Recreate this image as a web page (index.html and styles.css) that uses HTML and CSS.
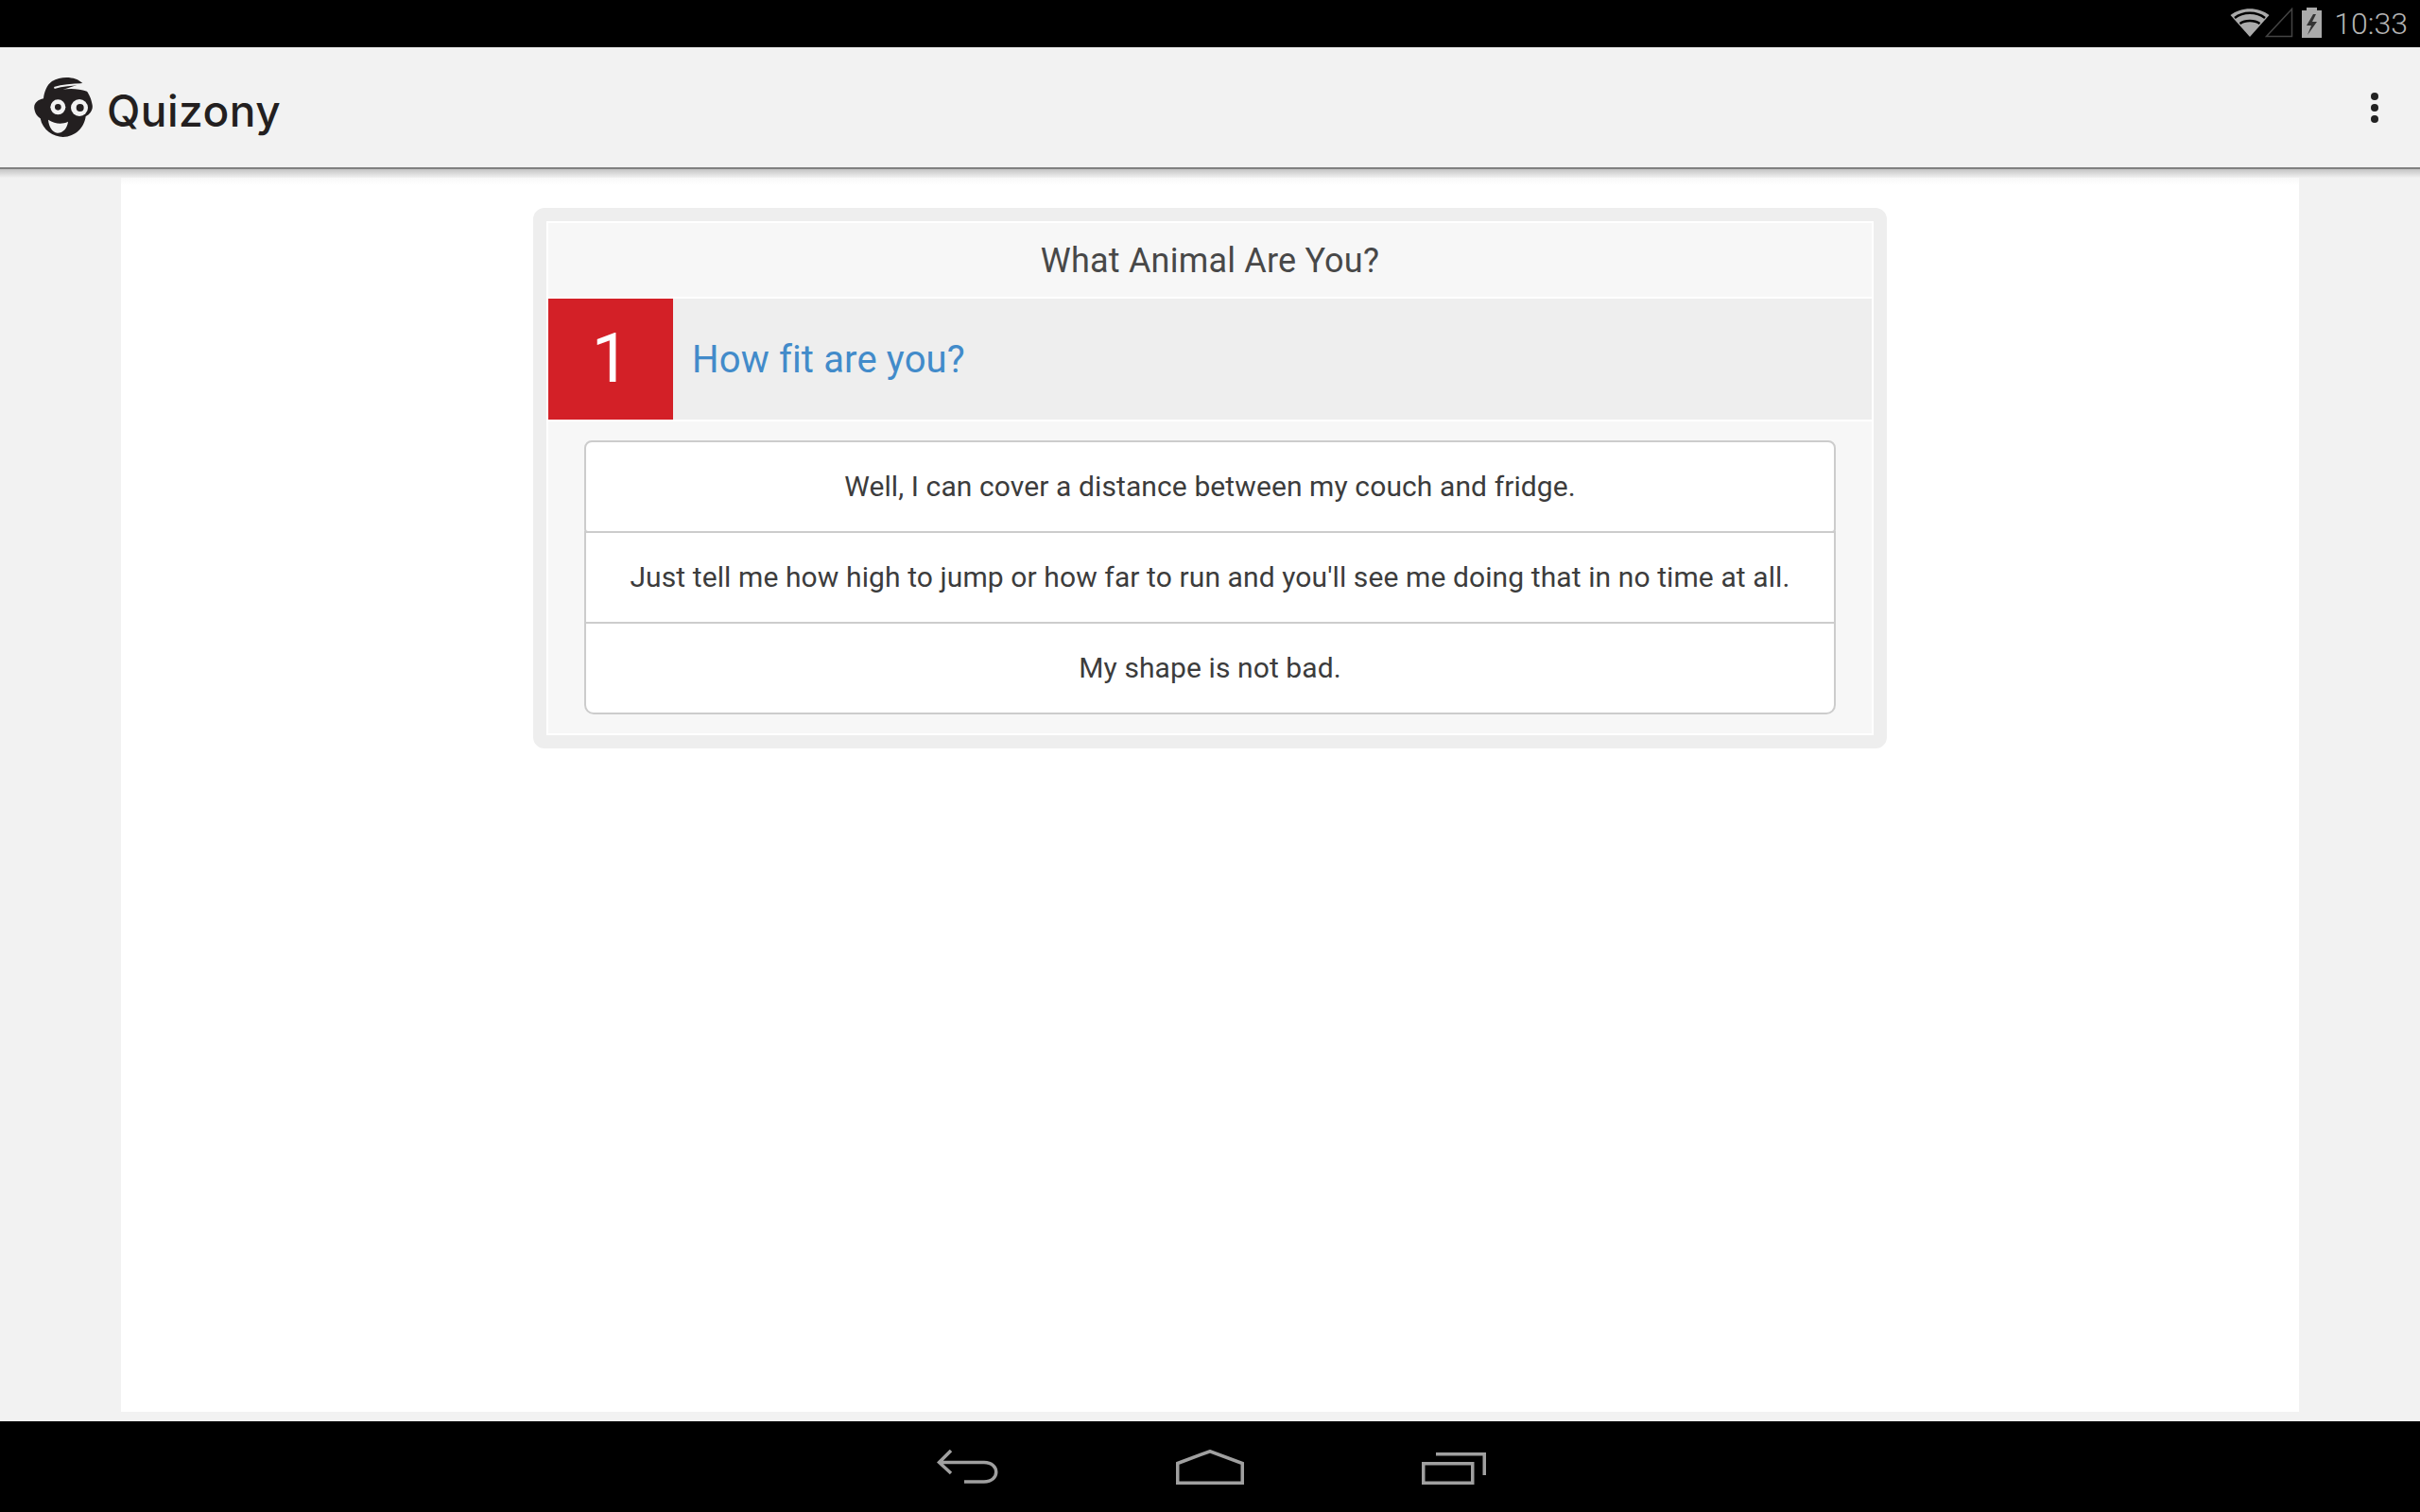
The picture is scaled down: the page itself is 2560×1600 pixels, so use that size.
FILE: index.html
```html
<!DOCTYPE html>
<html lang="en">
<head>
  <meta charset="UTF-8" />
  <title>Quizony</title>
  <link rel="stylesheet" href="styles.css">
</head>
<body>
  <div class="status-bar">
    <svg class="ic-wifi" width="42" height="32" viewBox="0 0 42 32">
      <path d="M0.5 8 C12 -1 30 -1 41.5 8 L21 31 Z" fill="#aaa"/>
      <path d="M5 11 C14 4 28 4 37 11 M10.500 17 C16 13 26 13 31.500 17" stroke="#000" stroke-width="2.500" fill="none"/>
    </svg>
    <svg class="ic-signal" width="30" height="32" viewBox="0 0 30 32">
      <path d="M1.500 30.500 L28.500 1.500 V30.500 Z" stroke="#444" stroke-width="1.500" fill="none"/>
    </svg>
    <svg class="ic-battery" width="21" height="32" viewBox="0 0 21 32">
      <path d="M5 0 H16 V3 H21 V32 H0 V3 H5 Z" fill="#aaa"/>
      <path d="M12 7 L5 19 H10 L6 29 L16 15 H11 L15 7 Z" fill="#333"/>
    </svg>
    <span class="clock">10:33</span>
  </div>

  <header class="app-bar">
    <div class="brand">
      <svg class="logo" width="65" height="65" viewBox="105 125 195 195">
        <path d="M262 146 C240 124 195 122 165 140 C148 152 140 175 138 195 C120 198 106 210 109 228 C112 245 120 252 128 258 C135 295 170 317 200 317 C240 317 268 285 272 252 C285 245 296 232 293 215 C290 195 282 180 276 172 C240 160 200 160 165 178 Z" fill="#231f20"/>
        <path d="M172 161 C200 153 235 150 262 150" stroke="#f2f2f2" stroke-width="6" fill="none"/>
        <circle cx="184" cy="222" r="24" fill="#f2f2f2"/>
        <circle cx="184" cy="222" r="10" fill="#231f20"/>
        <circle cx="252" cy="224" r="27" fill="#f2f2f2"/>
        <circle cx="254" cy="224" r="12" fill="#231f20"/>
        <path d="M153 262 C175 275 195 278 216 268 C214 290 198 305 182 304 C166 302 155 284 153 262 Z" fill="#f2f2f2"/>
      </svg>
      <span class="brand-name">Quizony</span>
    </div>
    <div class="menu-dots"><span></span><span></span><span></span></div>
  </header>
  <div class="bar-shadow"></div>

  <main class="content">
    <section class="quiz-card">
      <div class="quiz-inner">
        <h2 class="quiz-title">What Animal Are You?</h2>
        <div class="question">
          <div class="question-num">1</div>
          <div class="question-text">How fit are you?</div>
        </div>
        <div class="answers">
          <a class="answer">Well, I can cover a distance between my couch and fridge.</a>
          <a class="answer">Just tell me how high to jump or how far to run and you'll see me doing that in no time at all.</a>
          <a class="answer">My shape is not bad.</a>
        </div>
      </div>
    </section>
  </main>

  <nav class="nav-bar">
    <svg class="ic-back" width="66" height="36" viewBox="0 0 66 36">
      <path d="M15 1 L2.500 13.500 L15 25 M2.500 13.500 H50 C67 13.500 67 34 50 34 H29" stroke="#a0a0a0" stroke-width="3.500" fill="none"/>
    </svg>
    <svg class="ic-home" width="72" height="37" viewBox="0 0 72 37">
      <path d="M1.750 14.500 L36 1.750 L70.250 14.500 V35.250 H1.750 Z" stroke="#a0a0a0" stroke-width="3.500" fill="none"/>
    </svg>
    <svg class="ic-recent" width="68" height="34" viewBox="0 0 68 34">
      <path d="M15 1.750 H66.250 V24" stroke="#a0a0a0" stroke-width="3.500" fill="none"/>
      <rect x="1.750" y="11.750" width="52" height="20.500" stroke="#a0a0a0" stroke-width="3.500" fill="none"/>
    </svg>
  </nav>
</body>
</html>
```

FILE: styles.css
```css
* { box-sizing: border-box; }

body {
  margin: 0;
  height: 100vh;
  display: flex;
  flex-direction: column;
  background: #f2f2f2;
  font-family: Roboto, sans-serif;
  overflow: hidden;
}

.status-bar {
  height: 50px;
  background: #000;
  display: flex;
  align-items: flex-start;
  justify-content: flex-end;
  padding: 8px 13px 0 0;
}

.ic-wifi { margin-right: -5px; }
.ic-signal { margin-right: 9px; }
.ic-battery { margin-right: 13px; }

.clock {
  color: #b4b4b4;
  font-size: 32px;
  font-weight: 300;
  line-height: 34px;
}

.app-bar {
  height: 129px;
  border-bottom: 2px solid #808080;
  display: flex;
  align-items: center;
  justify-content: space-between;
  padding: 0 44px 0 35px;
}

.brand {
  display: flex;
  align-items: center;
  gap: 13px;
}

.brand-name {
  padding-top: 7px;
  font-family: Inter, sans-serif;
  font-size: 46px;
  font-weight: 500;
  letter-spacing: 0.5px;
  color: #231f20;
  line-height: 1;
}

.menu-dots {
  display: flex;
  flex-direction: column;
  gap: 4px;
}

.menu-dots span {
  width: 8px;
  height: 8px;
  border-radius: 50%;
  background: #222;
}

.bar-shadow {
  height: 9px;
  background: linear-gradient(#c4c4c4, #f0f0f0);
}

.content {
  flex: 1;
  margin: 0 128px 10px;
  padding-top: 32px;
  background: linear-gradient(#f8f8f8, #fff 8px);
}

.quiz-card {
  width: 1432px;
  margin: 0 auto;
  border: 14px solid #eee;
  border-radius: 12px;
}

.quiz-inner {
  border: 2px solid #fff;
  background: #f7f7f7;
}

.quiz-title {
  margin: 0;
  height: 80px;
  border-bottom: 2px solid #fff;
  text-align: center;
  font-size: 36px;
  font-weight: 400;
  letter-spacing: 0.2px;
  line-height: 80px;
  color: #484848;
}

.question {
  height: 130px;
  display: flex;
  background: #eee;
  border-bottom: 2px solid #fff;
}

.question-num {
  width: 132px;
  background: #d32027;
  color: #fff;
  font-size: 72px;
  font-weight: 400;
  line-height: 128px;
  text-align: center;
}

.question-text {
  padding: 1px 0 0 20px;
  font-size: 40px;
  letter-spacing: 0.15px;
  line-height: 128px;
  color: #428bca;
}

.answers {
  display: flex;
  flex-direction: column;
  padding: 20px 38px;
}

.answer {
  height: 98px;
  margin-bottom: -2px;
  border: 2px solid #ccc;
  background: #fff;
  text-align: center;
  font-size: 30px;
  letter-spacing: 0.1px;
  line-height: 94px;
  color: #3c3c3c;
}

.answer:first-child { border-radius: 8px 8px 4px 4px; }
.answer:last-child { border-radius: 0 0 10px 10px; margin-bottom: 0; }

.nav-bar {
  height: 96px;
  background: #000;
  display: grid;
  grid-template-columns: 256px 256px 256px;
  justify-content: center;
  justify-items: center;
  align-items: center;
}

.ic-recent { margin: 4px 0 0 4px; }
```
